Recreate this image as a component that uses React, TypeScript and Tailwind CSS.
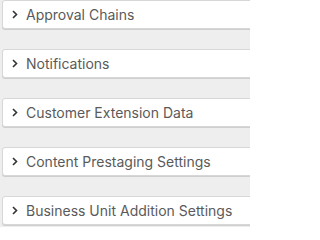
import React from "react";

const items = [
  "Approval Chains",
  "Notifications",
  "Customer Extension Data",
  "Content Prestaging Settings",
  "Business Unit Addition Settings",
];

function Chevron() {
  return (
    <svg width="6" height="9" viewBox="0 0 6 9" className="shrink-0">
      <path d="M1 1 L4.5 4.5 L1 8" fill="none" stroke="#333" strokeWidth="1.6" />
    </svg>
  );
}

export default function App() {
  return (
    <div
      className="w-[250px] h-[227px] overflow-hidden bg-[#eeeeee] flex flex-col gap-[20px] pl-[2px]"
      style={{ fontFamily: "Inter, 'Open Sans', sans-serif" }}
    >
      {items.map((t) => (
        <div
          key={t}
          className="w-[260px] h-[29px] shrink-0 bg-white border border-[#d7d7d7] rounded-[3px] shadow-[0_1px_0_#cfcfcf] flex items-center gap-[8px] pl-[9px] text-[14px] text-[#5a5a5a]"
        >
          <Chevron />
          <span>{t}</span>
        </div>
      ))}
    </div>
  );
}
